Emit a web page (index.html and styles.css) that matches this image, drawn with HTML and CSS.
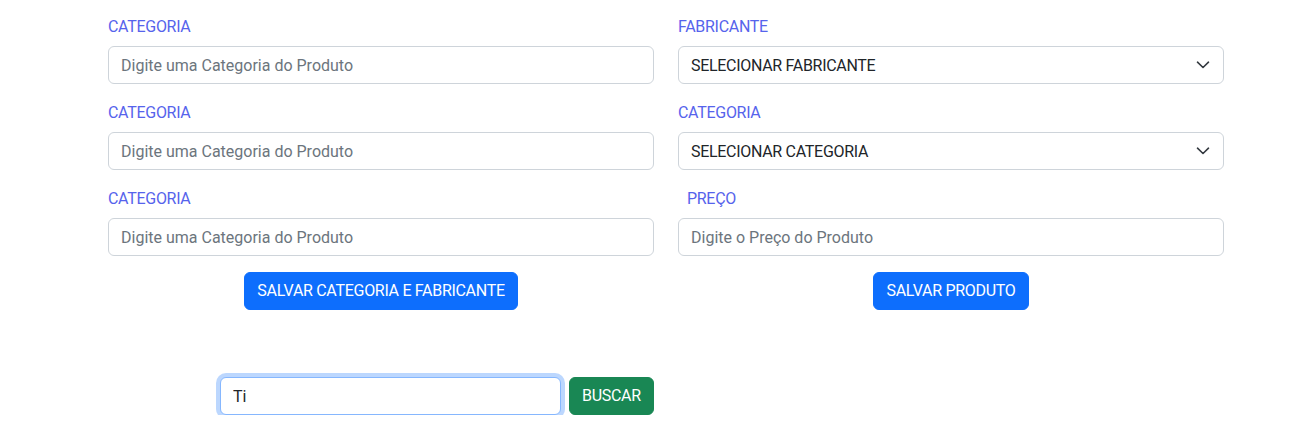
FILE: index.html
```html
<!DOCTYPE html>
<html lang="pt-BR">
<head>
<meta charset="utf-8">
<title>Cadastro</title>
<link rel="stylesheet" href="styles.css">
</head>
<body>
<main class="container">
  <div class="grid">
    <section class="col">
      <div class="field">
        <label class="label">CATEGORIA</label>
        <input class="control" type="text" placeholder="Digite uma Categoria do Produto">
      </div>
      <div class="field">
        <label class="label">CATEGORIA</label>
        <input class="control" type="text" placeholder="Digite uma Categoria do Produto">
      </div>
      <div class="field">
        <label class="label">CATEGORIA</label>
        <input class="control" type="text" placeholder="Digite uma Categoria do Produto">
      </div>
      <div class="actions">
        <button class="btn btn-primary">SALVAR CATEGORIA E FABRICANTE</button>
      </div>
    </section>
    <section class="col">
      <div class="field">
        <label class="label">FABRICANTE</label>
        <div class="select">
          <span>SELECIONAR FABRICANTE</span>
          <svg class="chev" width="14" height="8" viewBox="0 0 14 8"><path d="M1.5 1.2l5.5 5.3 5.5-5.3" fill="none" stroke="#343a40" stroke-width="1.6" stroke-linecap="round" stroke-linejoin="round"/></svg>
        </div>
      </div>
      <div class="field">
        <label class="label">CATEGORIA</label>
        <div class="select">
          <span>SELECIONAR CATEGORIA</span>
          <svg class="chev" width="14" height="8" viewBox="0 0 14 8"><path d="M1.5 1.2l5.5 5.3 5.5-5.3" fill="none" stroke="#343a40" stroke-width="1.6" stroke-linecap="round" stroke-linejoin="round"/></svg>
        </div>
      </div>
      <div class="field">
        <label class="label label-indent">PREÇO</label>
        <input class="control" type="text" placeholder="Digite o Preço do Produto">
      </div>
      <div class="actions">
        <button class="btn btn-primary">SALVAR PRODUTO</button>
      </div>
    </section>
  </div>
  <form class="search">
    <input class="control focused" type="text" value="Ti" autofocus>
    <button class="btn btn-success" type="button">BUSCAR</button>
  </form>
</main>
</body>
</html>
```
FILE: styles.css
```css
* { box-sizing: border-box; }
html, body { margin: 0; padding: 0; }
body {
  font-family: Roboto, "Noto Sans", sans-serif;
  font-size: 16px;
  line-height: 1.5;
  color: #212529;
  background: #fff;
}
.container {
  width: 1116px;
  margin-left: 108px;
  padding-top: 14px;
}
.grid {
  display: grid;
  grid-template-columns: 546px 546px;
  column-gap: 24px;
}
.field { margin-bottom: 16px; }
.label {
  display: block;
  color: #5663ec;
  padding-top: 1px;
  margin-bottom: 7px;
  line-height: 24px;
  letter-spacing: -0.3px;
}
.label-indent { padding-left: 9px; }
.control {
  display: block;
  width: 100%;
  height: 38px;
  padding: 6px 12px;
  font: inherit;
  color: #212529;
  background: #fff;
  border: 1px solid #ced4da;
  border-radius: 6px;
  outline: none;
}
.control::placeholder { color: #6c757d; }
.select {
  display: flex;
  align-items: center;
  justify-content: space-between;
  height: 38px;
  padding: 7px 13px 5px 12px;
  border: 1px solid #ced4da;
  border-radius: 6px;
  color: #212529;
  letter-spacing: -0.3px;
}
.chev { flex: none; margin-top: -3px; }
.actions { display: flex; justify-content: center; }
.btn {
  font: inherit;
  height: 38px;
  padding: 6px 12px;
  border: 1px solid transparent;
  border-radius: 6px;
  color: #fff;
  cursor: pointer;
  letter-spacing: -0.3px;
}
.btn-primary { background: #0d6efd; border-color: #0d6efd; }
.btn-success { background: #198754; border-color: #198754; }
.search {
  display: flex;
  gap: 8px;
  margin: 67px 0 0 112px;
}
.search .control { width: 341px; flex: none; }
.focused {
  border-color: #86b7fe;
  box-shadow: 0 0 0 4px rgba(13, 110, 253, 0.28);
}
```
